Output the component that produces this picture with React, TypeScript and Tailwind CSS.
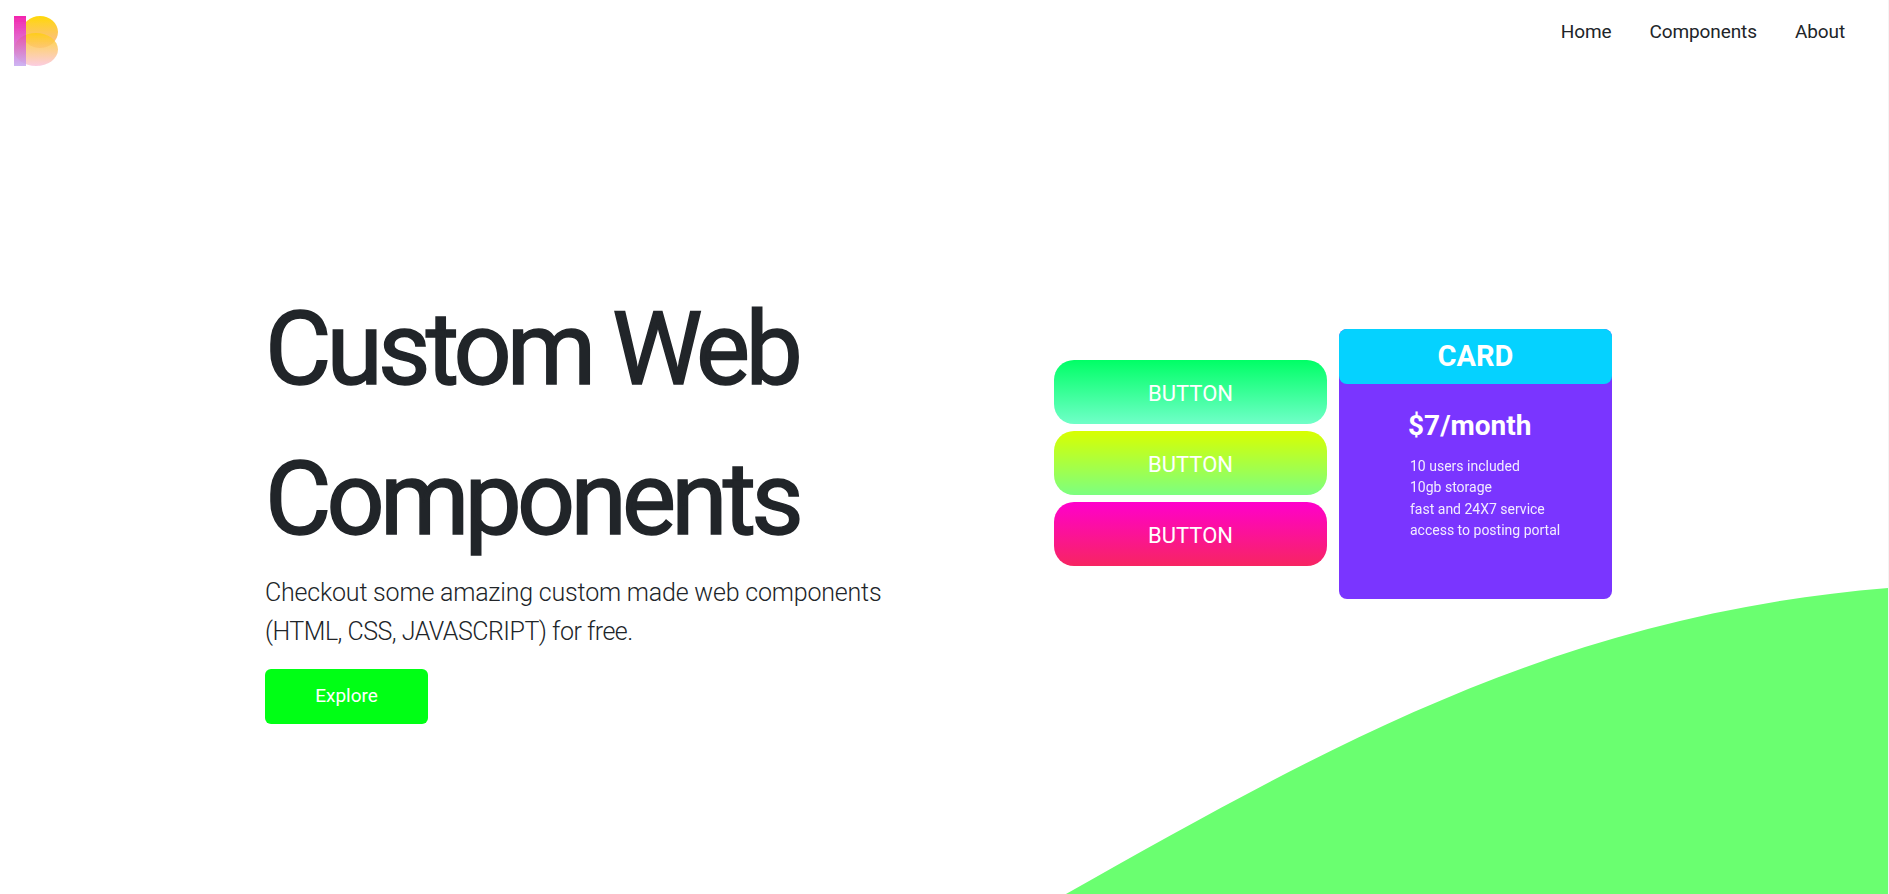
function Logo() {
  return (
    <svg width="44" height="50" viewBox="0 0 44 50" className="block">
      <defs>
        <linearGradient id="bar" x1="0" y1="0" x2="0" y2="1">
          <stop offset="0" stopColor="#f200a0" />
          <stop offset="1" stopColor="#c4a8f0" />
        </linearGradient>
        <linearGradient id="lobeA" x1="0" y1="0" x2="0" y2="1">
          <stop offset="0" stopColor="#ffd80a" />
          <stop offset="1" stopColor="#fbb8a0" />
        </linearGradient>
        <linearGradient id="lobeB" x1="0" y1="0" x2="0" y2="1">
          <stop offset="0" stopColor="#ffce10" />
          <stop offset="1" stopColor="#fbc4dc" />
        </linearGradient>
        <clipPath id="top"><rect x="12" y="0" width="32" height="50" /></clipPath>
        <filter id="soft"><feGaussianBlur stdDeviation="0.5" /></filter>
      </defs>
      <g filter="url(#soft)">
        <ellipse cx="26" cy="16" rx="18" ry="16" fill="url(#lobeA)" clipPath="url(#top)" />
        <ellipse cx="22" cy="33.5" rx="22" ry="16.5" fill="url(#lobeB)" opacity="0.85" />
        <rect x="0" y="0" width="12" height="50" fill="url(#bar)" opacity="0.85" />
      </g>
    </svg>
  );
}

function GradButton({ cls }: { cls: string }) {
  return (
    <div className={`h-[64px] w-[273px] pt-[2px] rounded-[20px] flex items-center justify-center text-white text-[22px] font-normal ${cls}`}>
      BUTTON
    </div>
  );
}

export default function App() {
  return (
    <div className="relative h-[894px] overflow-hidden bg-white text-[#212529] font-['Roboto',sans-serif]">
      <svg className="absolute left-0 top-0 w-[1889px] h-[894px]" viewBox="0 0 1889 894">
        <path d="M1066 894C1330 745 1560 615 1888 588V894Z" fill="#6aff70" />
        <rect x="1888" y="0" width="1" height="894" fill="#f4f4f4" />
      </svg>
      <header className="relative flex justify-between items-start pl-[14px] pr-[44px]">
        <div className="pt-[16px]"><Logo /></div>
        <nav className="flex gap-[38px] pt-[20px] text-[19px] leading-[24px] font-normal tracking-[-0.1px]">
          <span>Home</span>
          <span>Components</span>
          <span>About</span>
        </nav>
      </header>
      <main className="relative flex pl-[265px] pt-[208px]">
        <div className="w-[789px]">
          <h1 className="text-[102px] leading-[150px] font-normal tracking-[-4.8px] [-webkit-text-stroke:1.5px_#212529]">Custom Web<br />Components</h1>
          <p className="text-[25px] leading-[38.5px] font-light tracking-[-0.2px]">
            Checkout some amazing custom made web components<br />
            <span className="tracking-[-0.5px]">(HTML, CSS, JAVASCRIPT) for free.</span>
          </p>
          <div className="mt-[18px] w-[163px] h-[55px] rounded-[6px] bg-[#00ff15] text-white text-[19px] flex items-center justify-center">Explore</div>
        </div>
        <div className="flex items-start gap-[12px] pt-[55px]">
          <div className="flex flex-col gap-[7px] pt-[31px]">
            <GradButton cls="bg-linear-to-b/srgb from-[#00ff66] to-[#70ffc8]" />
            <GradButton cls="bg-linear-to-b/srgb from-[#d8ff00] to-[#7cff80]" />
            <GradButton cls="bg-linear-to-b/srgb from-[#ff00cc] to-[#f72562]" />
          </div>
          <div className="w-[273px] h-[270px] rounded-[8px] bg-[#7a35ff] text-white">
            <div className="h-[55px] rounded-[8px] bg-[#05d2ff] flex items-center justify-center text-[29px] font-bold">CARD</div>
            <div className="pl-[69px] pt-[25px]">
              <div className="text-[28px] leading-[34px] font-bold">$7/month</div>
              <div className="pt-[13px] text-[14px] leading-[21.3px] pl-[2px] opacity-90">
                <div>10 users included</div>
                <div>10gb storage</div>
                <div>fast and 24X7 service</div>
                <div>access to posting portal</div>
              </div>
            </div>
          </div>
        </div>
      </main>
    </div>
  );
}
